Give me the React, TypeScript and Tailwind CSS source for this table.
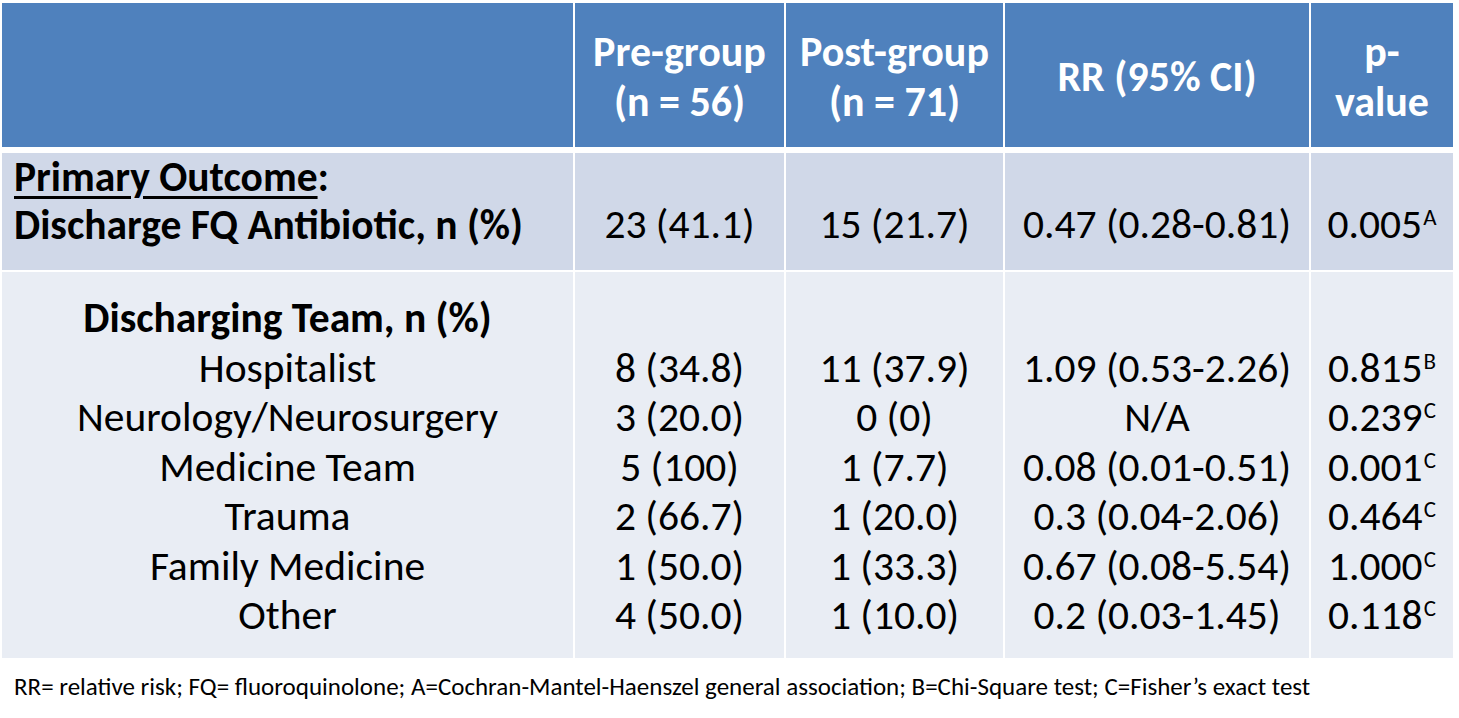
import React from "react";

const F = "font-['Carlito','Lato',sans-serif]";
const cols = "grid grid-cols-[571px_209px_217px_304px_142px] gap-x-[2px]";

const teams = [
  ["Hospitalist", "8 (34.8)", "11 (37.9)", "1.09 (0.53-2.26)", "0.815", "B"],
  ["Neurology/Neurosurgery", "3 (20.0)", "0 (0)", "N/A", "0.239", "C"],
  ["Medicine Team", "5 (100)", "1 (7.7)", "0.08 (0.01-0.51)", "0.001", "C"],
  ["Trauma", "2 (66.7)", "1 (20.0)", "0.3 (0.04-2.06)", "0.464", "C"],
  ["Family Medicine", "1 (50.0)", "1 (33.3)", "0.67 (0.08-5.54)", "1.000", "C"],
  ["Other", "4 (50.0)", "1 (10.0)", "0.2 (0.03-1.45)", "0.118", "C"],
];

function Sup({ c }: { c: string }) {
  return <sup className="text-[23px] leading-none align-baseline relative top-[-13px] ml-[1px]">{c}</sup>;
}

function Head({ children }: { children: React.ReactNode }) {
  return (
    <div className="bg-[#4f81bd] flex items-center justify-center text-center text-white font-bold text-[42px] leading-[50px] pt-[4px]">
      <div>{children}</div>
    </div>
  );
}

export default function App() {
  return (
    <div className={`w-[1459px] h-[718px] bg-white ${F} text-black overflow-hidden`}>
      <div className="pt-[3px] pl-[2px]">
        <div className={`${cols} h-[144px]`}>
          <div className="bg-[#4f81bd]" />
          <Head>Pre-group<br />(n = 56)</Head>
          <Head>Post-group<br />(n = 71)</Head>
          <Head>RR (95% CI)</Head>
          <Head>p-<br />value</Head>
        </div>

        <div className={`${cols} mt-[6px] h-[117px] text-[41.5px] leading-[48px]`}>
          <div className="bg-[#d0d8e8] pl-[12px] pt-0 font-bold whitespace-nowrap">
            <div>
              <span className="underline decoration-[3px] underline-offset-[5px]">Primary Outcome</span>:
            </div>
            <div>Discharge FQ Antibiotic, n (%)</div>
          </div>
          <div className="bg-[#d0d8e8] pt-[47px] text-center">23 (41.1)</div>
          <div className="bg-[#d0d8e8] pt-[47px] text-center">15 (21.7)</div>
          <div className="bg-[#d0d8e8] pt-[47px] text-center whitespace-nowrap">0.47 (0.28-0.81)</div>
          <div className="bg-[#d0d8e8] pt-[47px] text-center">
            0.005<Sup c="A" />
          </div>
        </div>

        <div className={`${cols} mt-[2px] h-[386px] text-[41.5px] leading-[49.5px]`}>
          <div className="bg-[#e9edf4] pt-[21px] text-center">
            <div className="font-bold">Discharging Team, n (%)</div>
            {teams.map((t) => (
              <div key={t[0]}>{t[0]}</div>
            ))}
          </div>
          {[1, 2, 3].map((i) => (
            <div key={i} className="bg-[#e9edf4] pt-[21px] text-center whitespace-nowrap">
              <div>&nbsp;</div>
              {teams.map((t) => (
                <div key={t[0]}>{t[i]}</div>
              ))}
            </div>
          ))}
          <div className="bg-[#e9edf4] pt-[21px] text-center whitespace-nowrap">
            <div>&nbsp;</div>
            {teams.map((t) => (
              <div key={t[0]}>
                {t[4]}
                <Sup c={t[5]} />
              </div>
            ))}
          </div>
        </div>
      </div>
      <div className="pl-[14px] mt-[14px] text-[25px] leading-[30px] whitespace-nowrap">
        RR= relative risk; FQ= fluoroquinolone; A=Cochran-Mantel-Haenszel general association; B=Chi-Square test; C=Fisher’s exact test
      </div>
    </div>
  );
}
